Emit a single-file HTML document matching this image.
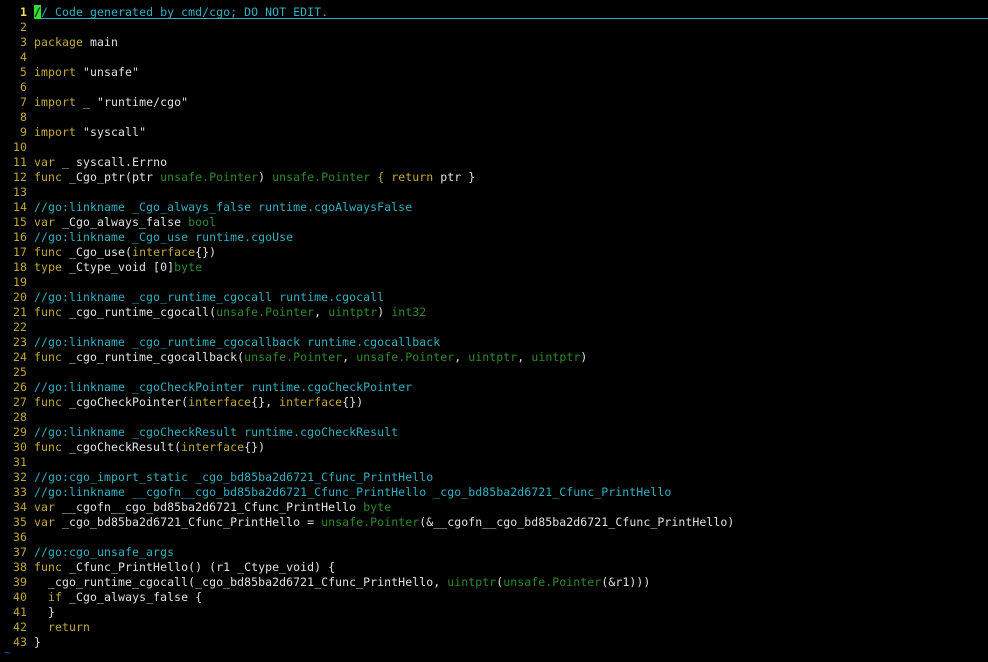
<!DOCTYPE html>
<html><head><meta charset="utf-8"><style>
body{margin:0;background:#000;width:988px;height:658px;overflow:hidden}
pre{margin:0;position:absolute;top:5px;left:0;font:11.5px/15px "DejaVu Sans Mono","Liberation Mono",monospace;color:#e0e0e0;letter-spacing:0.08px}
.n{color:#c0a838;display:inline-block;width:27px;text-align:right;margin-right:7px}
.n1{color:#f0e060;font-weight:bold}
.k{color:#c0a838}.c{color:#30b0c0}.t{color:#2d8a2d}.s{color:#e0e0e0}
.cur{background:#30e030;color:#000}
.line1{position:absolute;left:34px;right:0;top:18px;height:1px;background:#30b0c0}
.tilde{position:absolute;left:4px;top:648px;color:#3050d0;font:11.5px monospace}
</style></head><body>
<div class="line1"></div>
<pre><span class="n n1">1</span><span class="c"><span class="cur">/</span>/ Code generated by cmd/cgo; DO NOT EDIT.</span>
<span class="n">2</span>
<span class="n">3</span><span class="k">package</span> main
<span class="n">4</span>
<span class="n">5</span><span class="k">import</span> "unsafe"
<span class="n">6</span>
<span class="n">7</span><span class="k">import</span> _ "runtime/cgo"
<span class="n">8</span>
<span class="n">9</span><span class="k">import</span> "syscall"
<span class="n">10</span>
<span class="n">11</span><span class="k">var</span> _ syscall.Errno
<span class="n">12</span><span class="k">func</span> _Cgo_ptr(ptr <span class="t">unsafe.Pointer</span>) <span class="t">unsafe.Pointer</span> <span class="k">{ return</span> ptr }
<span class="n">13</span>
<span class="n">14</span><span class="c">//go:linkname _Cgo_always_false runtime.cgoAlwaysFalse</span>
<span class="n">15</span><span class="k">var</span> _Cgo_always_false <span class="t">bool</span>
<span class="n">16</span><span class="c">//go:linkname _Cgo_use runtime.cgoUse</span>
<span class="n">17</span><span class="k">func</span> _Cgo_use(<span class="k">interface</span>{})
<span class="n">18</span><span class="k">type</span> _Ctype_void [0]<span class="t">byte</span>
<span class="n">19</span>
<span class="n">20</span><span class="c">//go:linkname _cgo_runtime_cgocall runtime.cgocall</span>
<span class="n">21</span><span class="k">func</span> _cgo_runtime_cgocall(<span class="t">unsafe.Pointer</span>, <span class="t">uintptr</span>) <span class="t">int32</span>
<span class="n">22</span>
<span class="n">23</span><span class="c">//go:linkname _cgo_runtime_cgocallback runtime.cgocallback</span>
<span class="n">24</span><span class="k">func</span> _cgo_runtime_cgocallback(<span class="t">unsafe.Pointer</span>, <span class="t">unsafe.Pointer</span>, <span class="t">uintptr</span>, <span class="t">uintptr</span>)
<span class="n">25</span>
<span class="n">26</span><span class="c">//go:linkname _cgoCheckPointer runtime.cgoCheckPointer</span>
<span class="n">27</span><span class="k">func</span> _cgoCheckPointer(<span class="k">interface</span>{}, <span class="k">interface</span>{})
<span class="n">28</span>
<span class="n">29</span><span class="c">//go:linkname _cgoCheckResult runtime.cgoCheckResult</span>
<span class="n">30</span><span class="k">func</span> _cgoCheckResult(<span class="k">interface</span>{})
<span class="n">31</span>
<span class="n">32</span><span class="c">//go:cgo_import_static _cgo_bd85ba2d6721_Cfunc_PrintHello</span>
<span class="n">33</span><span class="c">//go:linkname __cgofn__cgo_bd85ba2d6721_Cfunc_PrintHello _cgo_bd85ba2d6721_Cfunc_PrintHello</span>
<span class="n">34</span><span class="k">var</span> __cgofn__cgo_bd85ba2d6721_Cfunc_PrintHello <span class="t">byte</span>
<span class="n">35</span><span class="k">var</span> _cgo_bd85ba2d6721_Cfunc_PrintHello = <span class="t">unsafe.Pointer</span>(&amp;__cgofn__cgo_bd85ba2d6721_Cfunc_PrintHello)
<span class="n">36</span>
<span class="n">37</span><span class="c">//go:cgo_unsafe_args</span>
<span class="n">38</span><span class="k">func</span> _Cfunc_PrintHello() (r1 _Ctype_void) {
<span class="n">39</span>  _cgo_runtime_cgocall(_cgo_bd85ba2d6721_Cfunc_PrintHello, <span class="t">uintptr</span>(<span class="t">unsafe.Pointer</span>(&amp;r1)))
<span class="n">40</span>  <span class="k">if</span> _Cgo_always_false {
<span class="n">41</span>  }
<span class="n">42</span>  <span class="k">return</span>
<span class="n">43</span>}</pre>
<div class="tilde">~</div>
</body></html>
